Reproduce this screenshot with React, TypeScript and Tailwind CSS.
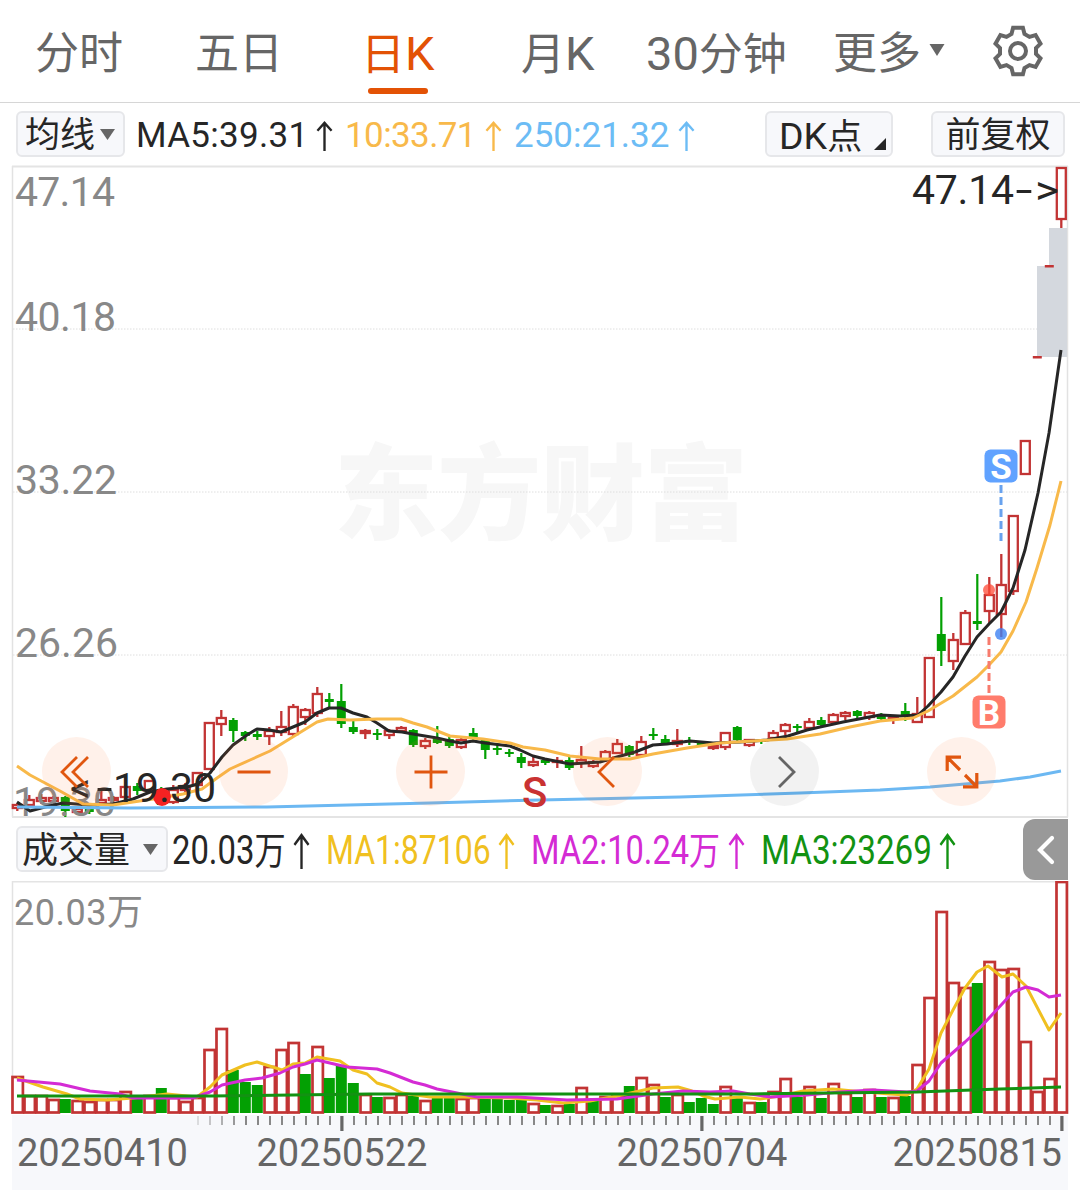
import { useState } from "react";

// [color, body top, body bottom, high, low, volume top]
type Candle = [string, number, number, number, number, number]

// "g2" is a red candle over a green volume bar, "r2" is the opposite, "d" is a limit-up dash
const candles: Candle[] = [
    ["r", 805, 808, 803, 811, 1077], ["r", 800, 805, 795, 808, 1096], ["r", 798, 801, 794, 804, 1096], ["r", 798, 801, 796, 803, 1100],
    ["g", 797, 811, 796, 817, 1099], ["r", 809, 812, 807, 814, 1101], ["r2", 809, 812, 807, 814, 1102], ["r", 800, 803, 791, 806, 1100],
    ["r", 798, 800, 796, 803, 1100], ["r", 787, 797, 785, 799, 1092], ["g", 786, 791, 783, 795, 1097], ["r", 781, 790, 780, 793, 1096],
    ["g", 789, 805, 787, 805, 1088], ["r", 790, 802, 785, 804, 1098], ["r", 786, 790, 783, 793, 1102], ["r", 773, 785, 772, 787, 1098],
    ["r", 723, 769, 722, 770, 1050], ["r", 718, 724, 710, 736, 1029], ["g", 720, 731, 718, 742, 1070], ["g", 732, 736, 731, 741, 1082],
    ["g", 734, 737, 731, 740, 1085], ["r", 731, 736, 727, 745, 1067], ["r", 727, 732, 711, 736, 1050], ["r", 707, 734, 704, 736, 1043],
    ["g2", 710, 717, 708, 725, 1074], ["r", 694, 713, 687, 717, 1047], ["g", 699, 702, 693, 708, 1078], ["g", 701, 724, 684, 728, 1065],
    ["g", 727, 732, 719, 734, 1083], ["r", 731, 733, 729, 739, 1095], ["g", 733, 735, 729, 740, 1097], ["r", 731, 735, 729, 739, 1098],
    ["r", 728, 731, 726, 733, 1095], ["g", 730, 745, 729, 747, 1096], ["r", 741, 746, 738, 749, 1101], ["g", 738, 743, 726, 744, 1098],
    ["g", 739, 746, 736, 748, 1097], ["r", 740, 747, 738, 749, 1099], ["r2", 733, 738, 728, 741, 1098], ["g", 740, 750, 739, 759, 1097],
    ["g", 748, 750, 745, 755, 1097], ["g", 752, 754, 749, 757, 1100], ["g", 757, 763, 753, 768, 1098], ["r", 762, 765, 756, 767, 1104],
    ["g", 760, 763, 758, 765, 1105], ["r", 761, 762, 757, 768, 1106], ["g", 760, 768, 757, 770, 1104], ["r", 760, 763, 746, 768, 1088],
    ["g2", 762, 766, 760, 768, 1101], ["r", 752, 760, 750, 762, 1097], ["r", 744, 753, 739, 754, 1096], ["g", 746, 755, 745, 757, 1086],
    ["r", 742, 755, 736, 757, 1078], ["r2", 734, 736, 728, 740, 1085], ["g", 739, 743, 735, 745, 1097], ["r", 741, 744, 729, 747, 1095],
    ["g", 740, 742, 737, 745, 1102], ["g", 743, 746, 742, 747, 1098], ["g2", 746, 748, 744, 750, 1104], ["r", 733, 747, 732, 750, 1087],
    ["g", 727, 740, 726, 741, 1098], ["r", 740, 745, 739, 747, 1103], ["g", 740, 742, 739, 744, 1102], ["r", 733, 738, 730, 741, 1092],
    ["r", 725, 731, 723, 735, 1079], ["g", 726, 728, 724, 732, 1097], ["r", 722, 728, 718, 729, 1087], ["g", 720, 725, 717, 727, 1098],
    ["r", 715, 722, 713, 724, 1084], ["r", 713, 716, 711, 720, 1094], ["g", 711, 716, 710, 718, 1097], ["r", 713, 717, 711, 720, 1090],
    ["g", 715, 719, 713, 720, 1097], ["r", 718, 719, 716, 724, 1098], ["g", 711, 715, 703, 721, 1096], ["r", 714, 722, 697, 723, 1065],
    ["r", 658, 717, 657, 718, 998], ["r2", 634, 651, 597, 666, 912], ["r", 640, 661, 633, 670, 983], ["r", 613, 644, 610, 645, 988],
    ["g", 621, 624, 574, 630, 983], ["r", 595, 611, 577, 624, 962], ["r", 585, 614, 554, 637, 970], ["r", 516, 591, 515, 595, 969],
    ["r", 441, 474, 440, 475, 1042], ["d", 357, 357, 357, 357, 1092], ["d", 266, 266, 266, 266, 1079], ["r", 168, 219, 167, 228, 882],
]

const isGreen = (c: Candle) => c[0] == "g" || c[0] == "r2"
const volGreen = (c: Candle) => c[0] == "g" || c[0] == "g2"

const RED = "#c23434"
const GREEN = "#03a003"

const ma5 = "17,802 30,811 45,807 63,803 90,805 113,804 133,799 150,792 167,789 187,787 198,784 210,773 222,757 233,745 247,735 257,729 269,730 281,732 293,727 305,722 317,713 329,708 341,708 353,713 367,717 377,723 389,731 402,732 413,734 437,738 450,741 461,743 473,741 485,743 510,746 520,750 533,756 545,759 570,764 600,762 617,757 635,752 653,745 667,744 690,741 713,743 740,742 767,740 788,736 807,730 820,727 843,722 880,715 900,716 918,715 928,706 941,692 953,677 965,656 977,637 989,624 1001,612 1013,588 1025,550 1038,493 1049,433 1061,350"
const ma10 = "17,766 30,775 60,791 83,804 113,805 133,802 160,798 183,794 202,789 217,778 230,769 250,760 270,751 317,722 328,719 350,720 377,719 401,719 413,723 427,727 450,736 483,739 510,743 523,747 545,750 570,756 600,759 630,759 653,754 687,748 720,743 753,741 787,739 820,734 850,727 880,721 913,718 928,711 953,696 977,677 989,665 1001,652 1013,631 1026,602 1037,568 1050,525 1061,481"
const ma250 = "17,807 130,808 267,807 430,803 540,800 680,797 800,793 880,790 930,787 1000,781 1030,777 1061,771"
const vol1 = "17,1078 43,1087 67,1094 80,1099 107,1100 133,1098 167,1094 197,1097 210,1087 222,1075 245,1065 257,1062 282,1070 293,1064 305,1063 317,1057 340,1061 353,1070 367,1074 377,1083 390,1087 402,1093 430,1097 463,1097 510,1098 537,1100 563,1103 590,1101 617,1096 653,1088 678,1087 692,1091 703,1096 715,1099 740,1097 760,1099 780,1096 803,1091 833,1089 853,1091 890,1094 907,1095 917,1089 929,1069 941,1033 953,1010 965,988 977,972 988,966 1002,977 1013,974 1026,986 1049,1030 1061,1013"
const vol2 = "17,1080 60,1084 90,1091 120,1094 133,1098 193,1098 210,1092 222,1085 245,1080 262,1078 280,1073 293,1067 305,1064 317,1060 347,1067 377,1069 390,1073 413,1082 425,1085 437,1089 457,1093 477,1097 517,1097 567,1100 617,1099 653,1094 683,1091 710,1092 733,1091 750,1094 770,1097 807,1095 840,1092 873,1090 907,1092 917,1091 929,1081 941,1063 965,1042 977,1031 1003,1003 1013,992 1026,987 1038,990 1049,997 1061,995"
const vol3 = "17,1096 210,1096 370,1094 750,1094 917,1092 1000,1089 1061,1087"

const tabs = [
    { name: "分时", box: "w-[160px]" },
    { name: "五日", box: "w-[166px]" },
    { name: "日K", box: "w-[160px]" },
    { name: "月K", box: "w-[125px]" },
    { name: "30分钟", box: "w-[187px]" },
    { name: "更多", box: "w-[94px]" },
]

const pillBox = "h-[46px] rounded-md border-2 border-[#e6e7ea] bg-[#f7f8fb] flex items-center text-[#262626]"

// latin characters run slightly larger than the han ones beside them
function Mixed({ text, latin }: { text: string, latin: string }) {
    return (
        <>
            {text.split(/([A-Z0-9]+)/).filter(Boolean).map((part, index) => (
                <span key={index} className={/[A-Z0-9]/.test(part) ? latin : ""}>{part}</span>
            ))}
        </>
    )
}

function Up({ className }: { className: string }) {
    return (
        <svg className={className} viewBox="0 0 18 32" preserveAspectRatio="none" fill="none" stroke="currentColor" strokeWidth="2.5">
            <path d="M9 32V2M1.5 10.5L9 2L16.5 10.5" />
        </svg>
    )
}

function Gear() {
    const points: string[] = []
    for (let i = 0; i < 6; i++) {
        for (const [angle, r] of [[-12, 23.7], [12, 23.7], [21, 18.2], [39, 18.2]]) {
            const a = (i * 60 + angle) * Math.PI / 180
            points.push(`${(26 + r * Math.sin(a)).toFixed(1)},${(26 - r * Math.cos(a)).toFixed(1)}`)
        }
    }
    return (
        <svg className="w-[52px] h-[52px]" viewBox="0 0 52 52" fill="none" stroke="#666" strokeWidth="4">
            <polygon points={points.join(" ")} />
            <circle cx="26" cy="26" r="8" />
        </svg>
    )
}

function PriceChart() {
    return (
        <svg className="block w-full h-[652px] overflow-visible" viewBox="0 166 1080 652" fontFamily="Roboto, sans-serif">
            <text x="334" y="532" fontSize="104" fontWeight="900" fill="#f7f7f7" fontFamily="'Noto Sans CJK SC', sans-serif" textLength="414">东方财富</text>
            {[329, 492, 655].map((y) => (
                <line key={y} x1="13" x2="1067" y1={y} y2={y} stroke="#dedede" strokeDasharray="1.5 1.5" />
            ))}
            <path d="M12.5 166V817M1067.5 166V817" stroke="#e2e2e2" strokeWidth="1.5" />
            <path d="M12 166.5H1068M12 817H1068" stroke="#e4e4e4" strokeWidth="2" />
            <path d="M1049 228H1067V357H1037V266H1049Z" fill="#d4d8de" />
            {candles.map((c, i) => {
                const x = 17.3 + i * 12
                if (c[0] == "d") {
                    return <rect key={i} x={x - 4.5} y={c[1] - 1} width="9" height="2.5" fill={RED} />
                }
                if (isGreen(c)) {
                    return (
                        <g key={i} fill={GREEN}>
                            <rect x={x - 4.5} y={c[1]} width="9" height={c[2] - c[1]} />
                            <rect x={x - 1.1} y={c[3]} width="2.2" height={c[4] - c[3]} />
                        </g>
                    )
                }
                return (
                    <g key={i} stroke={RED} strokeWidth="2.3" fill="none">
                        <rect x={x - 4.5} y={c[1]} width="9" height={c[2] - c[1]} />
                        <path d={`M${x} ${c[3]}V${c[1]}M${x} ${c[2]}V${c[4]}`} />
                    </g>
                )
            })}
            <g fontSize="41" fill="#888">
                <text x="15" y="205.5" textLength="100">47.14</text>
                <text x="15" y="331" textLength="101">40.18</text>
                <text x="15" y="494" textLength="102">33.22</text>
                <text x="15" y="657" textLength="103">26.26</text>
                <text x="13" y="815.5" textLength="103">19.30</text>
            </g>
            <g fill="none" strokeLinejoin="round">
                <polyline points={ma5} stroke="#262626" strokeWidth="3" />
                <polyline points={ma10} stroke="#f8b94a" strokeWidth="3" />
                <polyline points={ma250} stroke="#6cb8f2" strokeWidth="3" />
            </g>
            <circle cx="162" cy="797" r="8.9" fill="#f52222" />
            <g fontSize="41" fill="#262626">
                <text x="912" y="203.5" textLength="102">47.14</text>
                <text x="1015.5" y="203.5" textLength="17" lengthAdjust="spacingAndGlyphs">-</text>
                <text x="1035" y="203.5" textLength="24" lengthAdjust="spacingAndGlyphs">&gt;</text>
                <text x="70" y="801.5">&lt;</text>
                <text x="96.5" y="801.5" textLength="16" lengthAdjust="spacingAndGlyphs">-</text>
                <text x="113" y="801.5" textLength="103">19.30</text>
            </g>
            <text x="522" y="807" fontSize="42" fontWeight="500" fill="#c93232">S</text>
            <circle cx="989" cy="590" r="6" fill="#ff4a36" opacity="0.75" />
            <circle cx="1001" cy="634" r="6" fill="#3f82f3" opacity="0.8" />
            <path d="M1001 485V542" stroke="#68a2ee" strokeWidth="3" strokeDasharray="8 4" />
            <path d="M989 637V694" stroke="#f77b6d" strokeWidth="3" strokeDasharray="8 4" />
            <rect x="984.5" y="449.5" width="33" height="33" rx="6" fill="#60a2ff" />
            <rect x="972.5" y="695.5" width="33" height="33" rx="6" fill="#ff7c6c" />
            <g fontSize="35" fontWeight="700" fill="#fff" textAnchor="middle">
                <text x="1001" y="478.5">S</text>
                <text x="989" y="724.5">B</text>
            </g>
        </svg>
    )
}

function VolumeChart() {
    return (
        <svg className="block w-full h-[234px]" viewBox="0 881 1080 234" fontFamily="Roboto, 'Noto Sans CJK SC', sans-serif">
            <path d="M12.5 881V1114M1067.5 881V1114" stroke="#e2e2e2" strokeWidth="1.5" />
            <path d="M12 881.5H1068" stroke="#e4e4e4" strokeWidth="2" />
            <text x="14" y="925" fontSize="36" fill="#888" textLength="129">20.03万</text>
            {candles.map((c, i) => {
                const x = 17.3 + i * 12
                if (volGreen(c)) {
                    return <rect key={i} x={x - 5.5} y={c[5]} width="11" height={1113 - c[5]} fill={GREEN} />
                }
                return <rect key={i} x={x - 4.8} y={c[5]} width="10.4" height={1112.5 - c[5]} fill="#fff" stroke={RED} strokeWidth="2.7" />
            })}
            <g fill="none" strokeWidth="3" strokeLinejoin="round">
                <polyline points={vol1} stroke="#f0c020" />
                <polyline points={vol2} stroke="#d42bd4" />
                <polyline points={vol3} stroke="#129212" />
            </g>
        </svg>
    )
}

function Axis() {
    const ticks = Array.from({ length: 73 }, (_, i) => 198 + i * 12)
    return (
        <footer className="mx-3 h-[75px] bg-[#f7f8fb]">
            <svg className="block w-full h-4" viewBox="12 1115 1056 16">
                {ticks.map((x, i) => (
                    (x - 342) % 360 == 0
                        ? <rect key={x} x={x - 1.7} y="1116" width="3.2" height="15" fill="#666" />
                        : <rect key={x} x={x - 1} y="1116" width="2" height="9" fill="#888" opacity={Math.min(1, 0.25 + i * 0.2)} />
                ))}
            </svg>
            <div className="flex pl-[5px] text-[38px] leading-[44px] text-[#666]">
                <span className="w-[239.5px]">20250410</span>
                <span className="w-[360px]">20250522</span>
                <span className="w-[276px]">20250704</span>
                <span className="tracking-[-0.2px]">20250815</span>
            </div>
        </footer>
    )
}

const round = "absolute top-[571px] size-[69px] rounded-full flex items-center justify-center"

export default function App() {
    const [Tab, settab] = useState("日K")

    return (
        <div className="w-[1080px] h-[1190px] overflow-hidden bg-white font-['Roboto','Noto_Sans_CJK_SC',sans-serif]">
            <header className="h-[103px] border-b border-[#d6d6d6] flex pl-[35px] text-[#666]">
                {tabs.map((tab) => (
                    <button key={tab.name} className={`${tab.box} h-full shrink-0 text-left`} onClick={() => settab(tab.name)}>
                        <div className={`relative w-fit h-full pt-1.5 flex items-center whitespace-nowrap text-[44px] ${Tab == tab.name ? "text-[#e35205]" : ""}`}>
                            <div className="flex items-baseline"><Mixed text={tab.name} latin="text-[47px]" /></div>
                            {Tab == tab.name && <div className="absolute left-[7px] bottom-2 w-[60px] h-1.5 rounded-full bg-[#e35205]" />}
                        </div>
                    </button>
                ))}
                <svg className="mt-[44px] ml-0.5 w-4 h-3" viewBox="0 0 16 12" fill="#666"><path d="M0.5 0H15.5L8 12Z" /></svg>
                <button className="ml-[47px] mt-[25px] h-[52px]"><Gear /></button>
            </header>

            <section className="h-[63px] pt-2 pl-4 flex text-[35px]">
                <button className={`${pillBox} w-[109px] pl-[7px]`}>
                    <span className="w-[75px] pt-1 text-left">均线</span>
                    <svg className="w-[15px] h-[11px]" viewBox="0 0 15 11" fill="#666"><path d="M0 0H15L7.5 11Z" /></svg>
                </button>
                <div className="ml-[11px] flex items-center h-[49px]">
                    <span className="w-[180px] pt-0.5 tracking-[0.3px] text-[#262626]">MA5:39.31</span>
                    <Up className="w-[17px] h-[30px] text-[#262626]" />
                    <span className="ml-3 w-[140px] pt-0.5 tracking-[-0.6px] text-[#f8b94a]">10:33.71</span>
                    <Up className="w-[17px] h-[30px] text-[#f8b94a]" />
                    <span className="ml-3 w-[164px] pt-0.5 text-[#6cbcf5]">250:21.32</span>
                    <Up className="w-[17px] h-[30px] text-[#6cbcf5]" />
                </div>
                <button className={`${pillBox} ml-[70px] w-[128px] pl-3`}>
                    <span className="w-[95px] pt-1 text-left"><Mixed text="DK点" latin="text-[37.5px]" /></span>
                    <svg className="mt-[19px] w-3 h-3" viewBox="0 0 12 12" fill="#262626"><path d="M12 0V12H0Z" /></svg>
                </button>
                <button className={`${pillBox} ml-[38px] w-[134px] pt-1 justify-center`}>前复权</button>
            </section>

            <main className="relative">
                <PriceChart />
                <button className={`${round} left-[42px] bg-[#ff732d]/10`}>
                    <svg className="w-[30px] h-[32px] -ml-1" viewBox="0 0 30 32" fill="none" stroke="#e0560f" strokeWidth="2.8"><path d="M17 1L2 16L17 31M28 1L13 16L28 31" /></svg>
                </button>
                <button className={`${round} left-[219px] bg-[#ff732d]/10`}>
                    <svg className="w-[34px] h-[34px]" viewBox="0 0 34 34" stroke="#e0560f" strokeWidth="2.8"><path d="M0.5 17H33.5" /></svg>
                </button>
                <button className={`${round} left-[396px] bg-[#ff732d]/10`}>
                    <svg className="w-[34px] h-[34px]" viewBox="0 0 34 34" stroke="#e0560f" strokeWidth="2.8"><path d="M0.5 17H33.5M17 0.5V33.5" /></svg>
                </button>
                <button className={`${round} left-[573px] bg-[#ff732d]/10`}>
                    <svg className="w-[18px] h-[32px] -ml-1" viewBox="0 0 18 32" fill="none" stroke="#e0560f" strokeWidth="2.8"><path d="M17 1L2 16L17 31" /></svg>
                </button>
                <button className={`${round} left-[750px] bg-black/5`}>
                    <svg className="w-[18px] h-[32px] ml-1" viewBox="0 0 18 32" fill="none" stroke="#666" strokeWidth="2.8"><path d="M1 1L16 16L1 31" /></svg>
                </button>
                <button className={`${round} left-[927px] bg-[#ff732d]/10`}>
                    <svg className="w-[34px] h-[34px]" viewBox="0 0 34 34" fill="none" stroke="#e0560f" strokeWidth="3.2"><path d="M16 2.2H2.2V16M2.2 2.2L15 15M18 31.8H31.8V18M31.8 31.8L20 20" /></svg>
                </button>
            </main>

            <section className="relative h-[63px] pt-2 pl-4 flex text-[40px]">
                <button className={`${pillBox} w-[152px] pl-1 text-[36px]`}>
                    <span className="w-[121px] pt-1 text-left">成交量</span>
                    <svg className="w-[15px] h-[11px]" viewBox="0 0 15 11" fill="#666"><path d="M0 0H15L7.5 11Z" /></svg>
                </button>
                <div className="ml-1 flex items-center h-[49px] whitespace-nowrap">
                    <div className="w-[121px] text-[#262626]"><div className="w-fit origin-left scale-x-[0.82]">20.03<span className="text-[38px]">万</span></div></div>
                    <Up className="w-[17px] h-[36px] text-[#262626]" />
                    <div className="ml-4 w-[172px] text-[#f0c020]"><div className="w-fit origin-left scale-x-[0.8]">MA1:87106</div></div>
                    <Up className="w-[17px] h-[36px] text-[#f0c020]" />
                    <div className="ml-4 w-[197px] text-[#d42bd4]"><div className="w-fit origin-left scale-x-[0.815]">MA2:10.24<span className="text-[38px]">万</span></div></div>
                    <Up className="w-[17px] h-[36px] text-[#d42bd4]" />
                    <div className="ml-4 w-[178px] text-[#129212]"><div className="w-fit origin-left scale-x-[0.83]">MA3:23269</div></div>
                    <Up className="w-[17px] h-[36px] text-[#129212]" />
                </div>
                <button className="absolute right-3 top-px w-[45px] h-[61px] rounded-l-xl bg-[#999] flex items-center justify-center">
                    <svg className="w-[18px] h-[30px]" viewBox="0 0 18 30" fill="none" stroke="#fff" strokeWidth="4.2" strokeLinecap="round"><path d="M15 3L3 15L15 27" /></svg>
                </button>
            </section>

            <VolumeChart />
            <Axis />
        </div>
    )
}
